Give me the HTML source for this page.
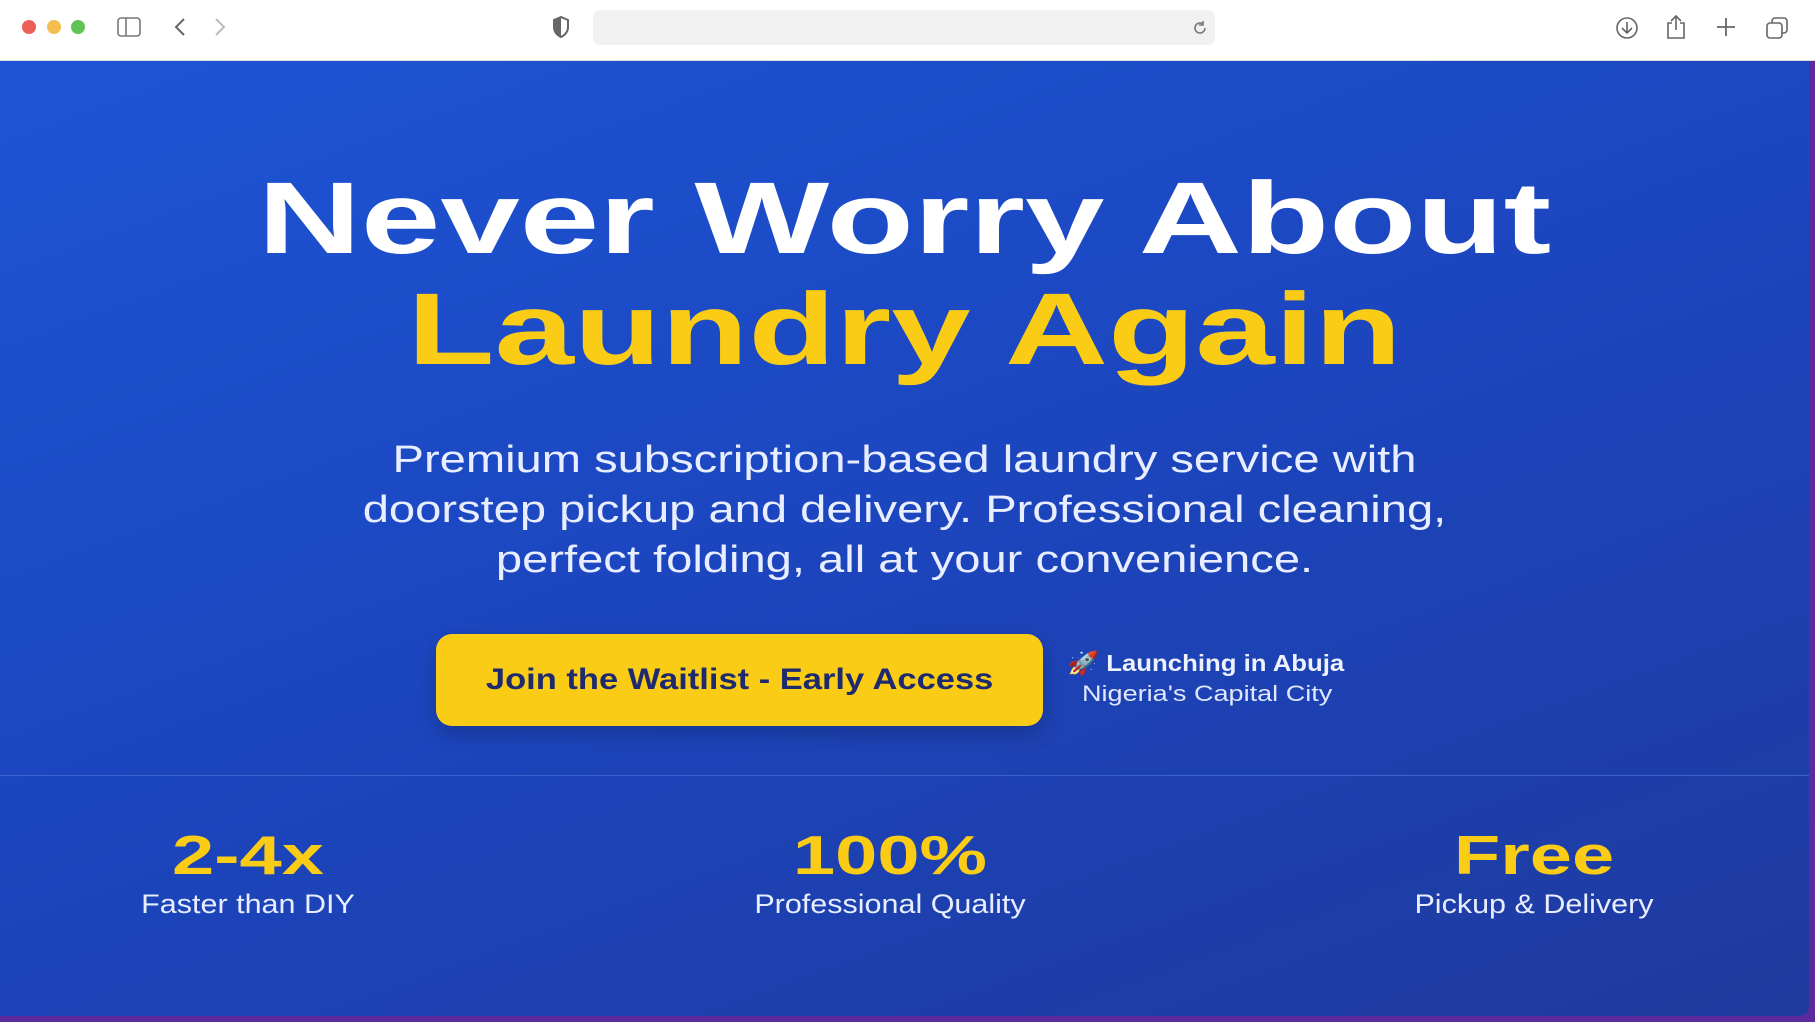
<!DOCTYPE html>
<html><head><meta charset="utf-8"><style>
*{margin:0;padding:0;box-sizing:border-box}
body{width:1815px;height:1022px;overflow:hidden;background:#5b2a9c;font-family:"Liberation Sans",sans-serif;position:relative}
.bar{position:absolute;left:0;top:0;width:1815px;height:61px;background:#fff;border-bottom:1px solid #ddd}
.dot{position:absolute;top:20px;width:14px;height:14px;border-radius:50%}
.url{position:absolute;left:593px;top:10px;width:622px;height:35px;background:#f1f1f1;border-radius:7px}
.main{position:absolute;left:0;top:61px;width:1809px;height:955px;background:linear-gradient(160deg,#1d55d6 0%,#1c45bd 50%,#1e3a9e 100%);border-bottom-right-radius:10px;overflow:hidden}
.c{position:absolute;left:0;width:1809px;text-align:center;white-space:nowrap}
h1{font-weight:bold;font-size:102px;line-height:1;letter-spacing:0px;transform:scaleX(1.4)}
.p{color:#e8edff;font-size:38px;line-height:50px;transform:scaleX(1.24)}
.btn{position:absolute;left:436px;top:573px;width:607px;height:92px;background:#facc15;border-radius:16px;color:#1e2a6e;font-weight:bold;font-size:30px;line-height:92px;text-align:center;box-shadow:0 8px 20px rgba(0,0,0,.2)}
.btn span{display:inline-block;transform:scaleX(1.15)}
.num{color:#facc15;font-weight:bold;font-size:55px;position:absolute;width:500px;text-align:center;top:762px;transform:scaleX(1.38)}
.lab{color:#e8edff;font-size:27px;position:absolute;width:500px;text-align:center;top:828px;transform:scaleX(1.13)}
svg{position:absolute}
</style></head><body>
<div class="bar">
<div class="dot" style="left:22px;background:#ec5f56"></div>
<div class="dot" style="left:47px;background:#f4bd4f"></div>
<div class="dot" style="left:71px;background:#5fc453"></div>
<svg style="left:117px;top:17px" width="24" height="20"><rect x="1" y="1" width="22" height="18" rx="3" fill="none" stroke="#777" stroke-width="1.6"/><line x1="9" y1="1" x2="9" y2="19" stroke="#777" stroke-width="1.6"/></svg>
<svg style="left:173px;top:17px" width="14" height="20"><path d="M11 2L3 10l8 8" fill="none" stroke="#666" stroke-width="2"/></svg>
<svg style="left:213px;top:17px" width="14" height="20"><path d="M3 2l8 8-8 8" fill="none" stroke="#bbb" stroke-width="2"/></svg>
<svg style="left:552px;top:16px" width="18" height="22"><path d="M9 1L2 4v7c0 5 3 8 7 10 4-2 7-5 7-10V4z" fill="none" stroke="#666" stroke-width="2"/><path d="M9 1v20c-4-2-7-5-7-10V4z" fill="#666"/></svg>
<div class="url"></div>
<svg style="left:1191px;top:19px" width="18" height="18"><path d="M14 9a5 5 0 1 1-2-4" fill="none" stroke="#777" stroke-width="1.6"/><path d="M12 2v4h-4" fill="none" stroke="#777" stroke-width="1.6"/></svg>
<svg style="left:1615px;top:16px" width="24" height="24"><circle cx="12" cy="12" r="10" fill="none" stroke="#666" stroke-width="1.6"/><path d="M12 6v11M7 12l5 5 5-5" fill="none" stroke="#666" stroke-width="1.6"/></svg>
<svg style="left:1665px;top:14px" width="22" height="26"><path d="M7 9H3v15h16V9h-4M11 2v14M6 7l5-5 5 5" fill="none" stroke="#666" stroke-width="1.6"/></svg>
<svg style="left:1716px;top:17px" width="20" height="20"><path d="M10 1v18M1 10h18" stroke="#666" stroke-width="1.8"/></svg>
<svg style="left:1765px;top:16px" width="24" height="24"><rect x="2" y="7" width="15" height="15" rx="3" fill="none" stroke="#666" stroke-width="1.6"/><path d="M7 7V5a3 3 0 0 1 3-3h9a3 3 0 0 1 3 3v9a3 3 0 0 1-3 3h-2" fill="none" stroke="#666" stroke-width="1.6"/></svg>
</div>
<div class="main">
<h1 class="c" style="top:106px;color:#fff">Never Worry About</h1>
<h1 class="c" style="top:217px;color:#facc15">Laundry Again</h1>
<div class="c p" style="top:374px">Premium subscription-based laundry service with<br>doorstep pickup and delivery. Professional cleaning,<br>perfect folding, all at your convenience.</div>
<div class="btn"><span>Join the Waitlist - Early Access</span></div>
<div style="position:absolute;left:1067px;top:589px;color:#eef2ff;font-weight:bold;font-size:23px;transform:scaleX(1.12);transform-origin:left;white-space:nowrap">🚀 Launching in Abuja</div>
<div style="position:absolute;left:1082px;top:620px;color:#e0e7ff;font-size:22px;transform:scaleX(1.23);transform-origin:left;white-space:nowrap">Nigeria's Capital City</div>
<div style="position:absolute;left:0;top:714px;width:1809px;height:1px;background:#3b63d0"></div>
<div class="num" style="left:-2px">2-4x</div><div class="lab" style="left:-2px">Faster than DIY</div>
<div class="num" style="left:640px">100%</div><div class="lab" style="left:640px">Professional Quality</div>
<div class="num" style="left:1284px">Free</div><div class="lab" style="left:1284px">Pickup &amp; Delivery</div>
</div>
</body></html>
